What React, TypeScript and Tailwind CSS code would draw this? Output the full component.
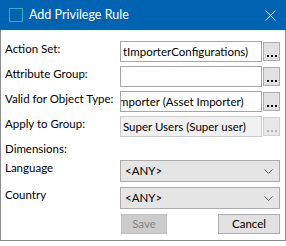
import React from "react";

const font = { fontFamily: 'Lato, "Liberation Sans", sans-serif' };

function Dots({ disabled }: { disabled?: boolean }) {
  const c = disabled ? "bg-[#b5b5b5]" : "bg-black";
  return (
    <div className="flex gap-[2px] mt-auto mb-[3px]">
      <div className={`w-[2px] h-[2px] ${c}`} />
      <div className={`w-[2px] h-[2px] ${c}`} />
      <div className={`w-[2px] h-[2px] ${c}`} />
    </div>
  );
}

function FieldRow({
  label,
  value,
  offset,
  disabled,
}: {
  label: string;
  value: string;
  offset?: string;
  disabled?: boolean;
}) {
  return (
    <div className="flex h-[21px]">
      <div className="w-[115px] leading-[16px] text-[11.5px] text-black whitespace-nowrap">{label}</div>
      <div
        className={`w-[142px] h-[21px] border overflow-hidden whitespace-nowrap leading-[19px] text-[11.5px] text-black pl-[2px] ${
          disabled ? "bg-[#f0f0f0] border-[#cccccc]" : "bg-white border-[#a6a6a6]"
        }`}
      >
        <span className={`inline-block ${offset ?? ""}`}>{value}</span>
      </div>
      <div
        className={`ml-[1px] mt-[1px] w-[17px] h-[19px] border flex justify-center ${
          disabled ? "bg-[#e8e8e8] border-[#d0d0d0]" : "bg-[#e1e1e1] border-[#adadad]"
        }`}
      >
        <Dots disabled={disabled} />
      </div>
    </div>
  );
}

function Combo({ label }: { label: string }) {
  return (
    <div className="flex h-[22px]">
      <div className="w-[115px] leading-[16px] text-[11.5px] text-black">{label}</div>
      <div className="w-[160px] h-[22px] border border-[#acacac] bg-[#e5e5e5] flex items-center pl-[4px] pr-[6px] text-[11.5px] text-black">
        <span className="flex-1">&lt;ANY&gt;</span>
        <svg width="9" height="5" viewBox="0 0 9 5" className="mt-[1px]">
          <path d="M0.5 0.5 L4.5 4.5 L8.5 0.5" fill="none" stroke="#5a5a5a" strokeWidth="1" />
        </svg>
      </div>
    </div>
  );
}

export default function App() {
  return (
    <div className="w-[286px] h-[246px] bg-white" style={font}>
      <div className="w-[286px] h-[241px] border-x border-b border-[#8c8c8c] bg-white flex flex-col">
        <div className="h-[30px] bg-[#0063b1] flex items-center -mx-[1px] px-[9px]">
          <div className="w-[14px] h-[14px] border border-[#2ab1c4] mr-[6px]" />
          <span className="text-white text-[12.5px] leading-[16px]">Add Privilege Rule</span>
          <div className="flex-1" />
          <svg width="11" height="11" viewBox="0 0 11 11" className="mr-[1px]">
            <path d="M0.5 0.5 L10.5 10.5 M10.5 0.5 L0.5 10.5" stroke="white" strokeWidth="1" />
          </svg>
        </div>
        <div className="flex flex-col pl-[4px] pt-[11px]">
          <div className="flex flex-col gap-[4px]">
            <FieldRow label="Action Set:" value="tImporterConfigurations)" />
            <FieldRow label="Attribute Group:" value="" />
            <FieldRow label="Valid for Object Type:" value="mporter (Asset Importer)" offset="-ml-[4px]" />
            <FieldRow label="Apply to Group:" value="Super Users (Super user)" disabled />
          </div>
          <div className="mt-[4px] h-[16px] leading-[16px] text-[11.5px] text-black">Dimensions:</div>
          <div className="mt-[3px] flex flex-col gap-[5px]">
            <Combo label="Language" />
            <Combo label="Country" />
          </div>
          <div className="flex mt-[5px] h-[20px]">
            <div className="w-[116px]" />
            <div className="w-[46px] h-[20px] border border-[#bfbfbf] bg-[#cccccc] text-[#838383] text-[11.5px] flex items-center justify-center">
              Save
            </div>
            <div className="flex-1" />
            <div className="w-[62px] h-[20px] mr-[5px] border border-[#adadad] bg-[#e1e1e1] text-black text-[11.5px] flex items-center justify-center">
              Cancel
            </div>
          </div>
        </div>
      </div>
    </div>
  );
}
